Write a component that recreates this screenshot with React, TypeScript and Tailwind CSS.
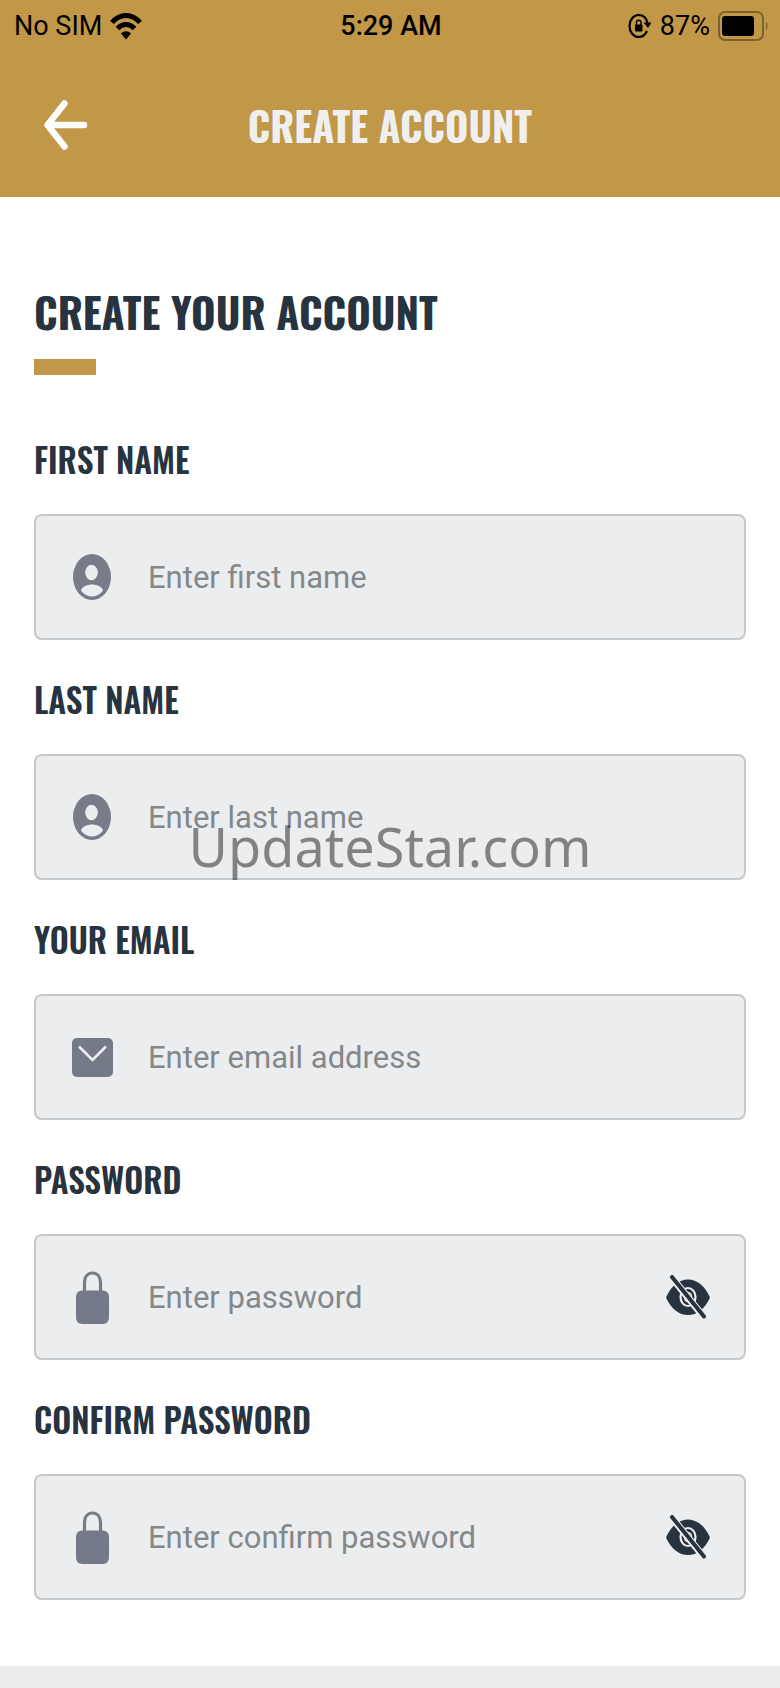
import { useState } from "react";
import type { ReactNode } from "react";

type IconName = "user" | "mail" | "lock";

interface FieldProps {
  id: string;
  label: string;
  placeholder: string;
  icon: IconName;
  type?: "text" | "email" | "password";
}

const FIELDS: FieldProps[] = [
  { id: "first-name", label: "First name", placeholder: "Enter first name", icon: "user" },
  { id: "last-name", label: "Last name", placeholder: "Enter last name", icon: "user" },
  { id: "email", label: "Your email", placeholder: "Enter email address", icon: "mail", type: "email" },
  { id: "password", label: "Password", placeholder: "Enter password", icon: "lock", type: "password" },
  {
    id: "confirm-password",
    label: "Confirm password",
    placeholder: "Enter confirm password",
    icon: "lock",
    type: "password",
  },
];

const ICONS: Record<IconName, ReactNode> = {
  user: (
    <svg viewBox="0 0 38 46" className="h-[46px] w-[38px]" aria-hidden>
      <ellipse cx="19" cy="23" rx="19" ry="23" fill="#777c88" />
      <ellipse cx="18.5" cy="18.5" rx="6.3" ry="7.8" fill="#ebedef" />
      <path d="M8 36.5C9 32.5 14.5 30.5 19 30.5S29 32.5 30 36.5C27 40.5 23 42.5 19 42.5S11 40.5 8 36.5Z" fill="#ebedef" />
    </svg>
  ),
  mail: (
    <svg viewBox="0 0 41 39" className="h-[39px] w-[41px]" aria-hidden>
      <rect width="41" height="39" rx="5" fill="#757a88" />
      <path d="M7 8.5 20.5 22 34 8.5" fill="none" stroke="#ebedef" strokeWidth="2.6" />
    </svg>
  ),
  lock: (
    <svg viewBox="0 0 33 53" className="h-[53px] w-[33px]" aria-hidden>
      <path d="M8.5 22V12C8.5 5.5 12 2 16.5 2S24.5 5.5 24.5 12V22" fill="none" stroke="#777d84" strokeWidth="3.2" />
      <rect y="19.5" width="33" height="33.5" rx="6" fill="#757a8a" />
    </svg>
  ),
};

function EyeOff() {
  return (
    <svg viewBox="0 0 44 44" className="size-11" aria-hidden>
      <path d="M0 22.5C5 11 13 4.5 22 4.5S39 11 44 22.5C39 34 31 40 22 40S5 34 0 22.5Z" fill="#27333e" />
      <ellipse cx="22" cy="22" rx="7.5" ry="9" fill="none" stroke="#ebedef" strokeWidth="2.2" />
      <ellipse cx="22" cy="22" rx="3.5" ry="4.5" fill="none" stroke="#ebedef" strokeWidth="1.5" />
      <path d="M3 -1 41 46" stroke="#ebedef" strokeWidth="7" />
      <path d="M6 2 38 41.5" stroke="#27333e" strokeWidth="4" strokeLinecap="round" />
    </svg>
  );
}

function Field({ id, label, placeholder, icon, type = "text" }: FieldProps) {
  const [visible, setVisible] = useState(false);
  const secret = type === "password";

  return (
    <div className="flex flex-col gap-8">
      <label
        htmlFor={id}
        className="font-[Oswald,sans-serif] text-[33px] leading-11 font-semibold text-[#27333e] uppercase"
      >
        {label}
      </label>
      <div className="flex h-[126px] items-center rounded-lg border-2 border-[#c5c8ca] bg-[#ebedef] pr-[34px]">
        <span className="flex w-28 shrink-0 justify-center">{ICONS[icon]}</span>
        <input
          id={id}
          type={secret && visible ? "text" : type}
          placeholder={placeholder}
          className="h-full min-w-0 flex-1 bg-transparent font-[Roboto,sans-serif] text-[31px] text-[#27333e] outline-none placeholder:text-[#84888b]"
        />
        {secret && (
          <button
            type="button"
            aria-label={visible ? "Hide password" : "Show password"}
            onClick={() => setVisible(!visible)}
          >
            <EyeOff />
          </button>
        )}
      </div>
    </div>
  );
}

function StatusBar() {
  return (
    <div className="grid h-[52px] grid-cols-3 items-center pr-3 pl-3.5 font-[Roboto,sans-serif] text-[27px] text-black">
      <div className="flex items-center gap-2">
        <span>No SIM</span>
        <svg viewBox="0 0 32 28" className="h-7 w-8" aria-hidden>
          <g fill="none" stroke="#000" strokeWidth="5">
            <path d="M2 10.5C10 1 22 1 30 10.5" />
            <path d="M7.5 16.5C12.5 11 19.5 11 24.5 16.5" />
          </g>
          <path d="M11 21.5C14 18.5 18 18.5 21 21.5L16 27.5Z" />
        </svg>
      </div>
      <span className="text-center font-medium">5:29 AM</span>
      <div className="flex items-center justify-end gap-2">
        <svg viewBox="0 0 24 26" className="h-[26px] w-6" aria-hidden>
          <path
            d="M19 18C17.5 21.5 14.5 24 10.5 24C5.5 24 1.5 19 1.5 13S5.5 2 10.5 2C15 2 18.5 5 19.5 10"
            fill="none"
            stroke="#000"
            strokeWidth="2.2"
          />
          <path d="M15.5 9.5H23.5L20 15Z" />
          <rect x="7" y="11.5" width="7.5" height="7" rx="1" />
          <path d="M8.5 12V9.5C8.5 6.5 13 6.5 13 9.5V12" fill="none" stroke="#000" strokeWidth="1.4" />
        </svg>
        <span>87%</span>
        <svg viewBox="0 0 50 30" className="h-[30px] w-[50px]" aria-hidden>
          <rect x="1" y="1" width="44" height="28" rx="6" fill="none" stroke="#7d622c" strokeWidth="2" />
          <rect x="4" y="5" width="32" height="20" rx="3" />
          <path d="M48 11C50 12 50 18 48 19Z" fill="#7d622c" />
        </svg>
      </div>
    </div>
  );
}

export default function App() {
  return (
    <div className="relative flex min-h-screen flex-col bg-white">
      <header className="bg-[#c09847]">
        <StatusBar />
        <div className="grid h-[145px] grid-cols-[1fr_auto_1fr] items-center px-11">
          <button type="button" aria-label="Back" className="w-11">
            <svg viewBox="0 0 44 50" className="h-[50px] w-11" aria-hidden>
              <path
                d="M20.5 3.5 3.5 25 20.5 46.5M4 25H40"
                fill="none"
                stroke="#fff"
                strokeWidth="6.5"
                strokeLinecap="round"
                strokeLinejoin="round"
              />
            </svg>
          </button>
          <h1 className="font-[Oswald,sans-serif] text-[40px] font-bold text-[#efefef] uppercase">
            Create account
          </h1>
        </div>
      </header>

      <main className="px-[34px] pt-21 pb-[66px]">
        <h2 className="font-[Oswald,sans-serif] text-[42px] leading-15 font-bold text-[#27333e] uppercase">
          Create your account
        </h2>
        <div className="mt-[18px] h-4 w-[62px] bg-[#c09847]" />
        <form className="mt-[63px] flex flex-col gap-[38px]">
          {FIELDS.map((f) => (
            <Field key={f.id} {...f} />
          ))}
        </form>
      </main>

      <footer className="min-h-5 flex-1 bg-[#ebedef]" />

      {/* watermark */}
      <div className="pointer-events-none absolute inset-0 flex items-center justify-center pt-1">
        <span className="font-['Noto_Sans',sans-serif] text-[54px] text-black/45">UpdateStar.com</span>
      </div>
    </div>
  );
}
